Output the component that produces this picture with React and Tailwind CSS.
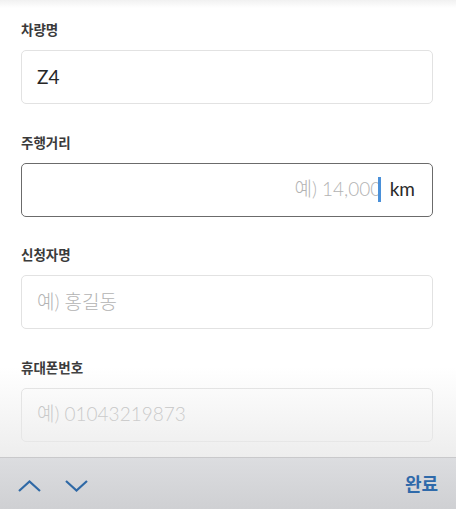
import React from "react";

const FONT = { fontFamily: 'Lato, "Noto Sans CJK KR", sans-serif' };

function Label({ children }) {
  return (
    <div className="h-[18px] text-[13.5px] leading-[18px] font-bold text-[#3a3a3a] mb-[11px]">
      {children}
    </div>
  );
}

function Box({ children, active }) {
  return (
    <div
      className={
        "h-[54px] rounded-[5px] flex items-center px-[15px] text-[19px] bg-white " +
        (active ? "border-[1.5px] border-[#6b6b6b]" : "border border-[#e2e2e2]")
      }
    >
      {children}
    </div>
  );
}

export default function App() {
  return (
    <div className="relative w-[456px] h-[509px] overflow-hidden bg-white flex flex-col" style={FONT}>
      <div className="h-[8px] bg-gradient-to-b from-[#f1f1f1] to-white" />
      <div className="flex-1 flex flex-col gap-[29.5px] pl-[21px] pr-[23px] pt-[13px] relative">
        <div>
          <Label>차량명</Label>
          <Box>
            <span className="text-[#262626]">Z4</span>
          </Box>
        </div>
        <div>
          <Label>주행거리</Label>
          <Box active>
            <div className="flex-1 flex items-center justify-end">
              <span className="text-[#b3b3b3] font-light">예) 14,000</span>
              <span className="w-[2.5px] h-[25px] bg-[#4a90d9] ml-[-3px] mr-[9px]" />
              <span className="text-[#2a2a2a] mr-[2px]">km</span>
            </div>
          </Box>
        </div>
        <div>
          <Label>신청자명</Label>
          <Box>
            <span className="text-[#b3b3b3] font-light">예) 홍길동</span>
          </Box>
        </div>
        <div>
          <Label>휴대폰번호</Label>
          <Box>
            <span className="text-[#b3b3b3] font-light">예) 01043219873</span>
          </Box>
        </div>
        <div className="pointer-events-none absolute left-0 right-0 bottom-0 h-[90px] bg-gradient-to-b from-white/0 to-[#e9e9e9]/80" />
      </div>
      <div className="h-[52px] border-t border-[#c9c9cb] bg-gradient-to-b from-[#dcdde0] to-[#cfd0d3] flex items-center pl-[18px] pr-[18px]">
        <svg width="23" height="12" viewBox="0 0 23 12" className="mt-[4px]">
          <polyline points="1,11 11.5,1.5 22,11" fill="none" stroke="#2f69a6" strokeWidth="2.2" />
        </svg>
        <svg width="23" height="12" viewBox="0 0 23 12" className="ml-[24px] mt-[4px]">
          <polyline points="1,1 11.5,10.5 22,1" fill="none" stroke="#2f69a6" strokeWidth="2.2" />
        </svg>
        <div className="flex-1" />
        <span className="text-[18px] font-bold text-[#2f6aaa] mt-[2px]">완료</span>
      </div>
    </div>
  );
}
